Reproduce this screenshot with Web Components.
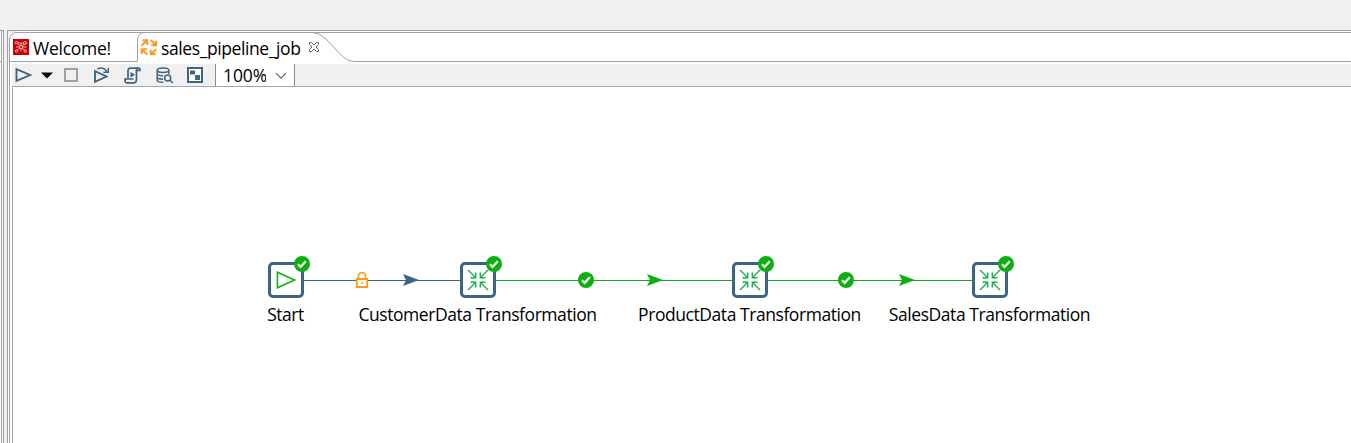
<!DOCTYPE html>
<html lang="en">
<head>
<meta charset="utf-8">
<title>sales_pipeline_job</title>
<style>
html,body{margin:0;height:100%;overflow:hidden;background:#f0f0f0;font:17.5px "Open Sans","Noto Sans",sans-serif;color:#000}
</style>
</head>
<body>
<job-window></job-window>
<script>
const define=(name,html,setup)=>customElements.define(name,class extends HTMLElement{
  connectedCallback(){
    if(this.shadowRoot)return;
    const t=document.createElement('template');
    t.innerHTML=html;
    this.attachShadow({mode:'open'}).append(t.content.cloneNode(true));
    if(setup)setup(this,this.shadowRoot);
  }
});

const icons={
  logo:[16,16,'<rect width="16" height="16" fill="#cc0000"/><g stroke="#f6c4c4" stroke-width=".9" fill="none"><path d="M4.500 4.500L7 7M9 7l2.500-2M7 9l-3 2.500M9.200 9l2 2M4.500 3.500L8 4.500l2.500-1M8 4.500V6M3 8h3M10 8h3.500M8 10v2"/><circle cx="3.500" cy="3.700" r="1.200"/><circle cx="12" cy="4" r="1.500"/><circle cx="3.500" cy="12" r="1.200"/><circle cx="12.200" cy="12" r="1.200"/><circle cx="8" cy="8" r="1.600"/></g>'],
  job:[18,18,'<path d="M1.500 7.700L7 2.200M2.500 2.200H7.200V7M10.700 2l5.300 5M16.200 2.700v4.500h-5M7.300 16.500l-5.500-5M7 11.300H1.800V16M16.300 11.200l-5.500 5M10.700 11.700v4.600h5" fill="none" stroke="#f99a23" stroke-width="2"/>'],
  close:[12,12,'<path d="M1.500 1.500h2L6 4l2.500-2.500h2v2L8 6l2.500 2.500v2h-2L6 8l-2.500 2.500h-2v-2L4 6 1.500 3.500z" fill="#fff" stroke="#6a6a6a" stroke-width="1"/>'],
  run:[17,16,'<path d="M1.500 2.200v11.600L15 8z" fill="none" stroke="#3d6480" stroke-width="1.900"/>'],
  drop:[12,7,'<path d="M0 0.500h12L6 6.500z" fill="#000"/>'],
  stop:[14,14,'<path d="M1 1h12v12H1z" fill="none" stroke="#a0a0a0" stroke-width="2"/>'],
  replay:[17,18,'<g fill="none" stroke="#3d6480"><path stroke-width="1.900" d="M2 5.200v10.600L13.500 10.500z"/><path stroke-width="1.500" d="M4.500 3C8 1 12 2 13.800 5.500M15.300 1.800v4.500h-5"/></g>'],
  sql:[17,17,'<g fill="none" stroke="#3d6480" stroke-width="1.700"><path d="M4 11V4q0-2.800 2.500-2.800H15q1 0 1 2.300h-3.500V12q0 3.800-2.500 3.800H2.500Q1 15.800 1 12h8.500"/><path d="M12.500 4q0-2.500 1.500-2.500"/></g><path d="M6.500 5v5.500L11 7.700z" fill="#3d6480"/>'],
  db:[18,17,'<g fill="none" stroke="#3d6480" stroke-width="1.500"><ellipse cx="7" cy="3.200" rx="5.800" ry="2.200"/><path d="M1.200 3.200v10q0 2 6 2M12.800 3.200V7M1.200 6.500q0 2.300 6 2.300M1.200 10q0 2.200 6 2.200"/><circle cx="11.700" cy="11" r="3"/><path d="M14 13.200l2.800 2.800"/></g>'],
  grid:[16,16,'<path d="M1 1h14v14H1z" fill="#fff" stroke="#3d6480" stroke-width="2"/><path d="M3 3.500h5v4h-5zM8 8h5v5h-5z" fill="#3d6480"/>'],
  chev:[12,8,'<path d="M1 1.200l5 5 5-5" fill="none" stroke="#606060" stroke-width="1.100"/>'],
  start:[20,18,'<path d="M1.400 1.200v15.600L18.500 9z" fill="none" stroke="#0fb00f" stroke-width="1.500"/>'],
  transform:[22,22,'<path d="M1 1l7.500 7.500M3.500 8.700h5.200V3.500M21 1l-7.500 7.500M18.500 8.700h-5.200V3.500M1 21l7.500-7.500M3.500 13.300h5.200v5.200M21 21l-7.500-7.500M18.500 13.300h-5.200v5.200" fill="none" stroke="#1cab4d" stroke-width="1.400"/>'],
  check:[16,16,'<circle cx="8" cy="8" r="8" fill="#0eb010"/><path d="M4 8.200l2.600 2.600L11.800 5.300" fill="none" stroke="#fff" stroke-width="2.200"/>'],
  lock:[14,17,'<path d="M3.500 7V4.500a3.500 3.500 0 0 1 7 0V7" fill="none" stroke="#fb9d14" stroke-width="1.700"/><path d="M1.800 7.500h10.400v8H1.800z" fill="#fff" stroke="#fb9d14" stroke-width="1.800"/><circle cx="7" cy="11.500" r=".9" fill="#fb9d14"/>'],
  arrow:[16,12,'<path d="M0 0l16 6-16 6 3-6z" fill="currentColor"/>']
};
define('ui-icon','<style>:host{display:block;flex:none}svg{display:block}</style><svg xmlns="http://www.w3.org/2000/svg"></svg>',(h,r)=>{
  const [w,ht,d]=icons[h.getAttribute('name')],s=r.querySelector('svg');
  s.setAttribute('width',w);s.setAttribute('height',ht);s.setAttribute('viewBox',`0 0 ${w} ${ht}`);s.innerHTML=d;
});

define('editor-tabs',`<style>
:host{display:block;height:31px;position:relative}
.edge{position:absolute;left:0;top:0}
.row{position:relative;display:flex;height:31px;box-sizing:border-box;padding-top:2px}
.tab{display:flex;align-items:flex-start}
.one{width:127px;padding-left:5px}.one ui-icon{margin-top:6px}
.one span{margin-left:4px}
.two ui-icon{margin-top:5px}
.two span{margin-left:3px}.two .x{margin:8px 0 0 8px}
span{line-height:28px;white-space:nowrap;margin-top:1px}
</style>
<svg class="edge" width="1343" height="31"><rect width="1343" height="31" fill="#fff"/><path d="M0 0H9Q2 1 1 8V31H0z" fill="#f0f0f0"/><path d="M1.500 31V8Q2.500 2 8 1.500H1343M1.500 30.500H129.500V8Q130.500 2 136 1.500M305 1.500Q312 2 318 8L332 23Q339 30.500 347 30.500H1343" fill="none" stroke="#a2a2a2"/></svg>
<div class="row"><div class="tab one"><ui-icon name="logo"></ui-icon><span style="letter-spacing:-.25px">Welcome!</span></div><div class="tab two"><ui-icon name="job"></ui-icon><span style="letter-spacing:-.4px">sales_pipeline_job</span><ui-icon class="x" name="close"></ui-icon></div></div>`);

define('job-toolbar',`<style>
:host{display:flex;height:22px;margin:2px 0 0 4px;background:#f0f0f0;align-items:center}
.zoom{display:flex;height:22px;width:78px;border:solid #8e8e8e;border-width:0 1px;background:#fff;align-items:center;margin-left:12px}
.zoom span{margin-left:7px;line-height:22px;width:43px;overflow:hidden;letter-spacing:-.1px}.zoom ui-icon{margin:2px 0 0 9px}
</style>
<ui-icon name="run" style="margin-left:3px"></ui-icon><ui-icon name="drop" style="margin-left:9px"></ui-icon><ui-icon name="stop" style="margin-left:11px"></ui-icon><ui-icon name="replay" style="margin-left:15px"></ui-icon><ui-icon name="sql" style="margin-left:14px"></ui-icon><ui-icon name="db" style="margin-left:15px"></ui-icon><ui-icon name="grid" style="margin-left:13px"></ui-icon>
<div class="zoom"><span>100%</span><ui-icon name="chev"></ui-icon></div>`);

define('job-entry',`<style>
:host{position:absolute;width:36px;height:36px;top:175px}
.box{width:36px;height:36px;box-sizing:border-box;border:3px solid #3d6480;border-radius:5px;background:#fff;display:grid;place-items:center}
.badge{position:absolute;left:26px;top:-6px}
.label{position:absolute;top:40px;left:50%;transform:translateX(-50%);margin-left:-.5px;white-space:nowrap;line-height:25px;font-size:17.5px;letter-spacing:-.44px}
</style><div class="box"></div><ui-icon class="badge" name="check"></ui-icon><div class="label"><slot></slot></div>`,(h,r)=>{
  h.style.left=h.getAttribute('x')+'px';
  r.querySelector('.box').innerHTML=`<ui-icon name="${h.getAttribute('icon')}"></ui-icon>`;
});
define('job-hop',`<style>
:host{position:absolute;top:193px;height:1px;background:currentColor}
ui-icon{position:absolute;transform:translateY(-50%);top:0}
</style><ui-icon class="a" name="arrow"></ui-icon>`,(h,r)=>{
  const g=a=>+h.getAttribute(a);
  h.style.left=g('from')+'px';h.style.width=g('to')-g('from')+'px';
  const m=document.createElement('ui-icon');
  m.setAttribute('name',h.getAttribute('mark'));
  m.style.left=g('mark-x')-g('from')+'px';
  r.append(m);
  r.querySelector('.a').style.left=g('arrow-x')-g('from')+'px';
});
define('job-canvas',`<style>
:host{display:block;position:relative;flex:1;margin-left:4px;border:solid #a5a5ab;border-width:1px 0 0 1px;background:#fff;overflow:hidden}
job-hop{color:#0eb010}
</style>
<job-hop from="291" to="447" mark="lock" mark-x="342" arrow-x="390" style="color:#3d6480"></job-hop>
<job-hop from="483" to="719" mark="check" mark-x="565" arrow-x="634"></job-hop>
<job-hop from="755" to="959" mark="check" mark-x="825" arrow-x="886"></job-hop>
<job-entry x="255" icon="start">Start</job-entry>
<job-entry x="447" icon="transform">CustomerData Transformation</job-entry>
<job-entry x="719" icon="transform">ProductData Transformation</job-entry>
<job-entry x="959" icon="transform">SalesData Transformation</job-entry>`);

define('job-window',`<style>
:host{display:flex;width:1351px;height:443px;box-sizing:border-box;padding-top:30px;overflow:hidden}
.side{width:3px;border:solid #a0a0a0;border-width:1px 1px 0 0;margin-right:3px;background:linear-gradient(90deg,#fff 1px,#a0a0a0 1px 2px,#fff 2px)}
.side i{display:block;height:30px;width:2px;border-bottom:1px solid #a0a0a0}
.main{width:1343px;border:solid #a0a0a0;border-width:1px 0 0 1px;display:flex;flex-direction:column;background:linear-gradient(90deg,#fff 1px,#a0a0a0 1px 2px,#fff 2px)}
</style><div class="side"><i></i></div><div class="main"><editor-tabs></editor-tabs><job-toolbar></job-toolbar><job-canvas></job-canvas></div>`);
</script>
</body>
</html>
